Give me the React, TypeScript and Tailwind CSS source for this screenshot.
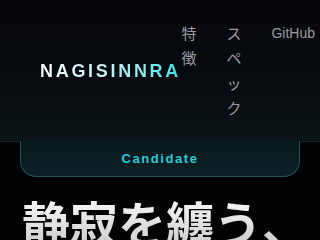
export default function App() {
  return (
    <div className="w-[320px] h-[240px] overflow-hidden bg-[#030305] font-['Liberation_Sans','Noto_Sans_CJK_JP',sans-serif]">
      {/* Header */}
      <header className="h-[142px] flex items-center justify-between pl-10 pr-[5px] bg-gradient-to-b from-[#06070b] via-[#070a0e] to-[#0a1317] border-b border-[#16242a]">
        <div className="text-lg font-bold tracking-[0.15em] leading-none bg-gradient-to-r from-white via-[#bff3f5] to-[#2ee0e6] bg-clip-text text-transparent">
          NAGISINNRA
        </div>
        <nav className="flex items-start gap-[30px] text-sm leading-[25px] text-[#9a9ca3]">
          <span className="w-[15px] text-[15px] break-all">特徴</span>
          <span className="w-[15px] text-[15px] break-all">スペック</span>
          <span className="whitespace-nowrap">GitHub</span>
        </nav>
      </header>

      {/* Candidate badge */}
      <div className="mx-5 h-[36px] -mt-px flex items-center justify-center rounded-b-2xl border border-t-0 border-[#1f5356] bg-gradient-to-b from-[#0a1a1e] to-[#0b1f24]">
        <span className="pt-px text-[13px] font-bold tracking-[0.12em] text-[#2bc8d6]">Candidate</span>
      </div>

      {/* Hero heading */}
      <h1 className="mt-[14px] pl-[22px] whitespace-nowrap text-[48px] font-bold leading-[60px] font-['Noto_Sans_CJK_JP',sans-serif] bg-gradient-to-b from-white to-[#c8c8c8] bg-clip-text text-transparent">
        静寂を纏う、
      </h1>
    </div>
  )
}
